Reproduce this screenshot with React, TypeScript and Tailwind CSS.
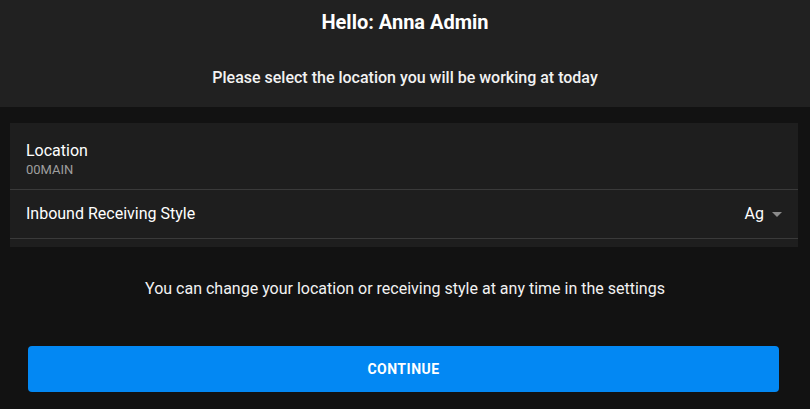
const App = () => {
    return (
        <div className="min-h-[409px] w-full bg-[#121212] font-['Roboto',sans-serif] text-white">
            <header className="flex h-[107px] flex-col items-center bg-[#212121]">
                <h1 className="mt-[10px] text-[20px] font-bold leading-[24px]">Hello: Anna Admin</h1>
                <p className="mt-[34px] text-[16px] font-medium leading-[20px] text-[#f2f2f2]">
                    Please select the location you will be working at today
                </p>
            </header>

            <div className="mx-[10px] mt-[16px] mr-[12px] bg-[#1e1e1e] pb-[8px]">
                <div className="flex h-[67px] flex-col border-b border-[#3a3a3a] px-[16px] pt-[18px]">
                    <span className="text-[16px] leading-[20px]">Location</span>
                    <span className="mt-[1px] text-[13px] leading-[16px] text-[#9e9e9e]">00MAIN</span>
                </div>
                <div className="flex h-[49px] items-center justify-between border-b border-[#3a3a3a] pl-[16px] pr-[16px]">
                    <span className="text-[16px] leading-[20px]">Inbound Receiving Style</span>
                    <div className="flex items-center gap-[8px]">
                        <span className="text-[16px] leading-[20px]">Ag</span>
                        <svg width="10" height="5" viewBox="0 0 10 5" className="mt-[1px]">
                            <path d="M0 0 L10 0 L5 5 Z" fill="#8a8a8a" />
                        </svg>
                    </div>
                </div>
            </div>

            <p className="mt-[32px] text-center text-[16px] leading-[20px] text-[#f2f2f2]">
                You can change your location or receiving style at any time in the settings
            </p>

            <div className="px-[28px] pt-[47px] pr-[31px]">
                <button className="flex h-[46px] w-full items-center justify-center rounded-[4px] bg-[#0388f3] text-[14px] font-bold tracking-[0.5px] text-white">
                    CONTINUE
                </button>
            </div>
        </div>
    );
};

export default App;
